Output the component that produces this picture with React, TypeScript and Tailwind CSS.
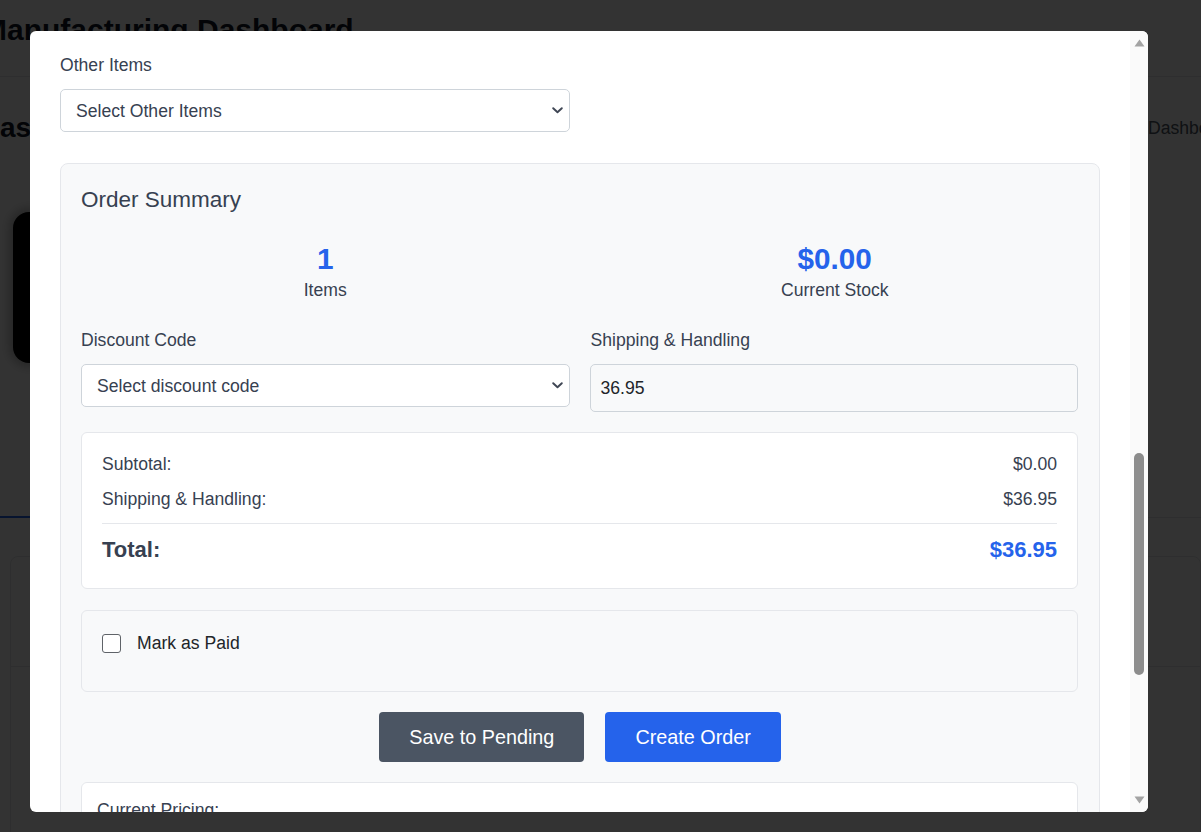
import React from "react";

function Chevron() {
  return (
    <svg width="11" height="7" viewBox="0 0 11 7" className="shrink-0">
      <path d="M1.2 1.2 L5.5 5.3 L9.8 1.2" stroke="#3f4654" strokeWidth="1.9" fill="none" strokeLinecap="round" strokeLinejoin="round" />
    </svg>
  );
}

function FakeSelect({ text, className }: { text: string; className?: string }) {
  return (
    <div
      className={
        "flex items-center justify-between h-[43px] rounded-[5px] border border-[#ced4da] bg-white pl-[15px] pr-[6px] text-[17.6px] leading-[22px] text-[#374151] " +
        (className ?? "")
      }
    >
      <span>{text}</span>
      <Chevron />
    </div>
  );
}

function Background() {
  return (
    <div className="flex flex-col w-full h-full bg-white">
      <div className="h-[77px] shrink-0 border-b border-[#e5e7eb] pt-[12px]">
        <h1 className="ml-[-18px] text-[30px] leading-[36px] font-bold text-[#111827] whitespace-nowrap">
          Manufacturing Dashboard
        </h1>
      </div>
      <div className="flex justify-between items-center mt-[33px] h-[36px] shrink-0">
        <h2 className="text-[28px] leading-[36px] font-bold text-[#111827]">as</h2>
        <div className="w-[53px] whitespace-nowrap text-[17.6px] text-[#4b5563]">Dashboard</div>
      </div>
      <div className="mt-[66px] ml-[13px] w-[220px] h-[151px] shrink-0 rounded-[16px] bg-black shadow-[0_0_10px_4px_rgba(0,0,0,0.25)]" />
      <div className="mt-[107px] h-[48px] shrink-0 border-b border-[#e5e7eb] flex items-end">
        <div className="w-[140px] h-[2px] bg-[#2563eb] mb-[-1px]" />
      </div>
      <div className="mt-[38px] ml-[10px] h-[300px] shrink-0 rounded-[8px] border border-[#e5e7eb]">
        <div className="h-[110px] border-b border-[#e5e7eb]" />
      </div>
    </div>
  );
}

function Scrollbar() {
  return (
    <div className="w-[18px] shrink-0 bg-[#fafafa] flex flex-col items-center">
      <svg width="11" height="8" viewBox="0 0 11 8" className="mt-[8px] shrink-0">
        <path d="M5.5 0.5 L10.5 7.5 L0.5 7.5 Z" fill="#a3a3a3" />
      </svg>
      <div className="mt-[406px] w-[10px] h-[222px] rounded-full bg-[#8c8c8c] shrink-0" />
      <div className="flex-1" />
      <svg width="11" height="8" viewBox="0 0 11 8" className="mb-[8px] shrink-0">
        <path d="M0.5 0.5 L10.5 0.5 L5.5 7.5 Z" fill="#a3a3a3" />
      </svg>
    </div>
  );
}

export default function App() {
  return (
    <div className="relative w-[1201px] h-[832px] overflow-hidden font-['Liberation_Sans',Arial,sans-serif]">
      <Background />
      <div className="absolute inset-0 bg-black/80" />
      <div className="absolute left-[30px] top-[31px] w-[1118px] h-[781px] rounded-[6px] bg-white flex overflow-hidden">
        <div className="flex-1 min-w-0 overflow-hidden px-[30px] pt-[22px]">
          <div className="text-[17.6px] leading-[24px] text-[#374151]">Other Items</div>
          <FakeSelect className="mt-[12px] w-[510px]" text="Select Other Items" />

          <div className="mt-[31px] rounded-[8px] border border-[#e5e7eb] bg-[#f8f9fa] px-[20px] pt-[21px] pb-[20px]">
            <h3 className="text-[22.5px] leading-[30px] text-[#374151]">Order Summary</h3>

            <div className="mt-[26px] grid grid-cols-2 gap-x-[21px]">
              <div className="flex flex-col items-center">
                <div className="text-[29.7px] leading-[36px] font-bold text-[#2563eb]">1</div>
                <div className="mt-[2px] text-[17.6px] leading-[22px] text-[#374151]">Items</div>
              </div>
              <div className="flex flex-col items-center">
                <div className="text-[29.7px] leading-[36px] font-bold text-[#2563eb]">$0.00</div>
                <div className="mt-[2px] text-[17.6px] leading-[22px] text-[#374151]">Current Stock</div>
              </div>
            </div>

            <div className="mt-[28px] grid grid-cols-2 gap-x-[21px] items-start">
              <div>
                <div className="text-[17.6px] leading-[22px] text-[#374151]">Discount Code</div>
                <FakeSelect className="mt-[13px]" text="Select discount code" />
              </div>
              <div>
                <div className="text-[17.6px] leading-[22px] text-[#374151]">Shipping &amp; Handling</div>
                <div className="mt-[13px] ml-[-1px] mr-[1px] h-[48px] rounded-[5px] border border-[#ced4da] bg-[#f8f9fa] pl-[10px] flex items-center text-[17.6px] leading-[22px] text-[#212529]">
                  36.95
                </div>
              </div>
            </div>

            <div className="mt-[20px] mr-[1px] rounded-[6px] border border-[#e5e7eb] bg-white px-[20px] pt-[20px] pb-[24px]">
              <div className="flex justify-between text-[17.6px] leading-[22px] text-[#374151]">
                <span>Subtotal:</span>
                <span>$0.00</span>
              </div>
              <div className="mt-[13px] flex justify-between text-[17.6px] leading-[22px] text-[#374151]">
                <span>Shipping &amp; Handling:</span>
                <span>$36.95</span>
              </div>
              <div className="mt-[13px] border-t border-[#e5e7eb]" />
              <div className="mt-[12px] flex justify-between items-center text-[22px] leading-[28px] font-bold">
                <span className="text-[#374151]">Total:</span>
                <span className="text-[#2563eb]">$36.95</span>
              </div>
            </div>

            <div className="mt-[21px] mr-[1px] h-[82px] rounded-[6px] border border-[#e5e7eb] bg-[#f8f9fa] px-[20px] pt-[21px]">
              <div className="flex items-center gap-[16px]">
                <div className="w-[19px] h-[19px] rounded-[3px] border border-[#5f6368] bg-white shrink-0" />
                <span className="text-[17.6px] leading-[22px] text-[#212529]">Mark as Paid</span>
              </div>
            </div>

            <div className="mt-[20px] flex justify-center gap-[21px]">
              <button className="h-[50px] px-[30px] rounded-[4px] bg-[#4b5563] text-white text-[19.8px] leading-[24px]">
                Save to Pending
              </button>
              <button className="h-[50px] px-[30px] rounded-[4px] bg-[#2563eb] text-white text-[19.8px] leading-[24px]">
                Create Order
              </button>
            </div>

            <div className="mt-[20px] mr-[1px] h-[120px] rounded-[6px] border border-[#e5e7eb] bg-white px-[15px] pt-[16px]">
              <div className="text-[17.6px] leading-[22px] text-[#374151]">Current Pricing:</div>
            </div>
          </div>
        </div>
        <Scrollbar />
      </div>
    </div>
  );
}
